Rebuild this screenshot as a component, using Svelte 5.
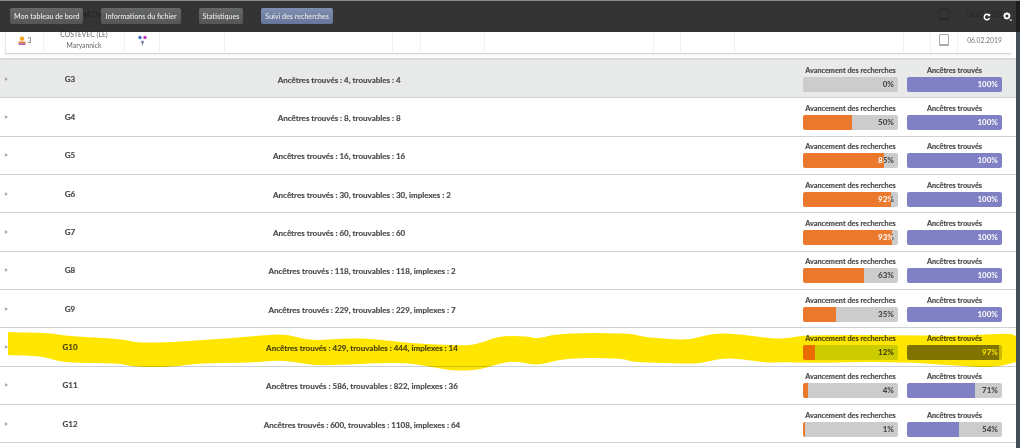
<script>
  const tabs = [
    { label: 'Mon tableau de bord' },
    { label: 'Informations du fichier' },
    { label: 'Statistiques' },
    { label: 'Suivi des recherches', active: true }
  ];

  const people = [
    { num: 2, name: ['MARGANA Daniel'], date: '06.02.2019' },
    { num: 3, name: ['COSTEVEC (LE)', 'Maryannick'], date: '06.02.2019' }
  ];

  const groups = [
    { id: 'G3', info: 'Ancêtres trouvés : 4, trouvables : 4', adv: 0, found: 100, grey: true },
    { id: 'G4', info: 'Ancêtres trouvés : 8, trouvables : 8', adv: 50, fill: 52, found: 100 },
    { id: 'G5', info: 'Ancêtres trouvés : 16, trouvables : 16', adv: 85, found: 100 },
    { id: 'G6', info: 'Ancêtres trouvés : 30, trouvables : 30', imp: 2, adv: 92, fill: 92.6, found: 100 },
    { id: 'G7', info: 'Ancêtres trouvés : 60, trouvables : 60', adv: 93, fill: 94, found: 100 },
    { id: 'G8', info: 'Ancêtres trouvés : 118, trouvables : 118', imp: 2, adv: 63, fill: 64, found: 100 },
    { id: 'G9', info: 'Ancêtres trouvés : 229, trouvables : 229', imp: 7, adv: 35, found: 100 },
    { id: 'G10', info: 'Ancêtres trouvés : 429, trouvables : 444', imp: 14, adv: 12, fill: 12.6, found: 97, marked: true },
    { id: 'G11', info: 'Ancêtres trouvés : 586, trouvables : 822', imp: 36, adv: 4, fill: 5, found: 71, foundFill: 71.5 },
    { id: 'G12', info: 'Ancêtres trouvés : 600, trouvables : 1108', imp: 64, adv: 1, fill: 2.2, found: 54, foundFill: 54.7 }
  ];

  // highlighter stroke drawn over the G10 row, doubled points keep the ends square
  const pts = [
    [8, 332], [8, 332], [50, 333], [67, 336], [123, 339], [137, 343], [173, 342], [233, 338], [267, 335], [287, 334],
    [310, 341], [347, 338], [377, 339], [407, 343], [467, 346], [480, 343], [500, 336], [527, 336], [537, 339],
    [560, 333], [630, 333], [643, 337], [670, 339], [690, 340], [713, 333], [740, 334], [773, 339], [790, 338],
    [805, 335], [897, 335], [960, 336], [1010, 333], [1016, 336], [1016, 336], [1016, 362], [1016, 362], [993, 368],
    [947, 365], [903, 362], [840, 362], [827, 363], [780, 362], [767, 363], [743, 359], [720, 358], [700, 364],
    [663, 363], [633, 362], [620, 358], [567, 358], [543, 364], [533, 365], [517, 361], [500, 363], [480, 370],
    [453, 371], [433, 367], [400, 362], [320, 366], [300, 363], [280, 360], [247, 363], [200, 363], [173, 367],
    [133, 367], [120, 363], [63, 363], [43, 356], [8, 355], [8, 355]
  ];

  function smooth(list) {
    const mid = (a, b) => `${(a[0] + b[0]) / 2} ${(a[1] + b[1]) / 2}`;
    let d = `M${mid(list[0], list[1])}`;
    for (let i = 1; i < list.length; i++) {
      const next = list[(i + 1) % list.length];
      d += ` Q${list[i][0]} ${list[i][1]} ${mid(list[i], next)}`;
    }
    return d + ' Z';
  }

  const marker = smooth(pts);
</script>

<div class="page">
  <div class="main">
    <div class="people">
      {#each people as p}
        <div class="person">
          <div class="c c1">
            <svg width="8" height="9" viewBox="0 0 8 9">
              <circle cx="4" cy="2.6" r="2.2" fill="#f0a020" />
              <rect x="0.5" y="5.5" width="7" height="2" fill="#e8832a" />
              <rect x="0.5" y="7.5" width="7" height="1.3" fill="#9a3fb0" />
            </svg>
            <span>{p.num}</span>
          </div>
          <div class="c c2">{#each p.name as line}<div>{line}</div>{/each}</div>
          <div class="c c3">
            <svg width="9" height="11" viewBox="0 0 9 11">
              <circle cx="2" cy="2.5" r="1.7" fill="#3f6fd0" />
              <circle cx="7" cy="2.5" r="1.7" fill="#c034b8" />
              <circle cx="4.5" cy="7" r="1.5" fill="#7a8aa0" />
              <path d="M4.5 8 V10.5" stroke="#8a8a8a" stroke-width="1" />
            </svg>
          </div>
          <div class="c w65"></div>
          <div class="c w168"></div>
          <div class="c w28"></div>
          <div class="c w64"></div>
          <div class="c w169"></div>
          <div class="c w27"></div>
          <div class="c w54"></div>
          <div class="c w169"></div>
          <div class="c w27"></div>
          <div class="c w27"><span class="check"></span></div>
          <div class="c date">{p.date}</div>
        </div>
      {/each}
    </div>

    <div class="groups">
      {#each groups as g}
        <div class="group" class:grey={g.grey} class:marked={g.marked}>
          <span class="arrow"></span>
          <span class="gid">{g.id}</span>
          <span class="info">{g.info}<span class:off={g.imp === undefined}>, implexes : {g.imp ?? 0}</span></span>
          <div class="stats">
            <div class="stat">
              <div class="label">Avancement des recherches</div>
              <div class="bar orange" style="--p:{g.fill ?? g.adv}%"><span>{g.adv}%</span></div>
            </div>
            <div class="stat">
              <div class="label">Ancêtres trouvés</div>
              <div class="bar purple" style="--p:{g.foundFill ?? g.found}%"><span>{g.found}%</span></div>
            </div>
          </div>
        </div>
      {/each}
    </div>
  </div>
  <div class="scrollbar"></div>
  <div class="edge"></div>

  <svg class="marker" width="1024" height="448" viewBox="0 0 1024 448">
    <path d={marker} fill="#ffe600" />
  </svg>

  <nav class="topbar">
    {#each tabs as t}
      <button class="tab" class:active={t.active}>{t.label}</button>
    {/each}
    <div class="tools">
      <svg width="8" height="8" viewBox="0 0 12 12" fill="none">
        <path d="M9.8 7.6 A4.1 4.1 0 1 1 9 3.2" stroke="#fff" stroke-width="2.2" />
        <path d="M10.8 0.4 V5 H6.2 Z" fill="#fff" />
      </svg>
      <svg width="9" height="9" viewBox="0 0 12 12">
        <circle cx="5.2" cy="5.2" r="3.1" fill="none" stroke="#fff" stroke-width="2.2" />
        <path d="M5.2 0.4 V2 M5.2 8.4 V10 M0.4 5.2 H2 M8.4 5.2 H10 M1.8 1.8 L2.9 2.9 M7.5 7.5 L8.6 8.6 M1.8 8.6 L2.9 7.5 M7.5 2.9 L8.6 1.8" stroke="#fff" stroke-width="1.6" />
        <path d="M9 10.8 H12" stroke="#fff" stroke-width="1.4" />
      </svg>
    </div>
  </nav>
</div>

<style>
  :global(body) {
    margin: 0;
    background: #fff;
  }

  .page {
    position: relative;
    display: flex;
    width: 1024px;
    height: 448px;
    overflow: hidden;
    font-family: Lato, "Liberation Sans", sans-serif;
    color: #4a4a4a;
  }

  .main {
    width: 1016px;
    flex: none;
  }

  .scrollbar {
    width: 4px;
    flex: none;
    background: #434f57;
  }

  .edge {
    flex: 1;
    background: #fff;
  }

  .people {
    margin: 1px 5px 0 5px;
    border-bottom: 1px solid #d5d8d8;
    box-shadow: 0 1px 2px rgba(0, 0, 0, 0.08);
  }

  .person {
    display: flex;
    height: 26px;
    font-size: 6.8px;
    color: #666;
  }

  .c {
    box-sizing: border-box;
    display: flex;
    flex-direction: column;
    align-items: center;
    justify-content: center;
    border-left: 1px solid #f0f0f0;
    text-align: center;
    line-height: 11px;
  }

  .c1 { width: 38px; flex-direction: row; gap: 2px; border-left-color: #e8e8e8; }
  .c2 { width: 81px; }
  .c3 { width: 35px; }
  .w65 { width: 65px; }
  .w168 { width: 168px; }
  .w28 { width: 28px; }
  .w64 { width: 64px; }
  .w169 { width: 169px; }
  .w27 { width: 27px; }
  .w54 { width: 54px; }
  .date { width: 54px; color: #777; }

  .check {
    width: 8px;
    height: 9px;
    border: 1px solid #aaa;
    border-bottom-width: 2px;
    border-radius: 1px;
    background: #fff;
  }

  .groups {
    margin-top: 4px;
    border-top: 2px solid #d8dada;
  }

  .group {
    box-sizing: border-box;
    display: grid;
    grid-template-columns: 50px 40px 544px 1fr;
    align-items: center;
    height: 38.33px;
    padding-right: 14px;
    border-bottom: 1px solid #ccd2d5;
    font-size: 8px;
    font-weight: 700;
    -webkit-text-stroke: 0.15px;
  }

  .group.grey {
    background: #e8e9e9;
  }

  .arrow {
    width: 0;
    height: 0;
    margin-left: 5px;
    border-left: 3px solid #aaa;
    border-top: 2px solid transparent;
    border-bottom: 2px solid transparent;
  }

  .gid {
    text-align: center;
  }

  .info {
    margin-top: 2px;
    text-align: center;
  }

  .off {
    visibility: hidden;
  }

  .stats {
    display: flex;
    justify-content: flex-end;
    gap: 9px;
  }

  .stat {
    display: flex;
    flex-direction: column;
    gap: 2px;
    width: 95px;
  }

  .label {
    font-size: 7.3px;
    text-align: center;
    line-height: 9px;
    white-space: nowrap;
  }

  .bar {
    height: 15px;
    border-radius: 2px;
    line-height: 15px;
    text-align: right;
    font-size: 8px;
    -webkit-text-stroke: 0;
  }

  .bar span {
    display: block;
    padding-right: 4px;
    font-weight: 900;
    background: linear-gradient(90deg, #fff var(--p), #444 var(--p));
    -webkit-background-clip: text;
    background-clip: text;
    color: transparent;
  }

  .orange {
    background: linear-gradient(90deg, #ea782d var(--p), var(--track, #ccc) var(--p));
  }

  .purple {
    background: linear-gradient(90deg, #8080c4 var(--p), var(--track, #ccc) var(--p));
  }

  /* the marker multiplies, this keeps the bars greenish under it like the scan */
  .marked .orange {
    --track: #cce2cc;
  }

  .marker {
    position: absolute;
    left: 0;
    top: 0;
    mix-blend-mode: multiply;
    pointer-events: none;
  }

  .topbar {
    position: absolute;
    left: 0;
    top: 0;
    box-sizing: border-box;
    display: flex;
    align-items: flex-start;
    gap: 18px;
    width: 1020px;
    height: 32px;
    padding: 7px 0 0 10px;
    border-top: 1px solid #8c8c8c;
    background: rgba(24, 24, 24, 0.88);
  }

  .tab {
    height: 16px;
    padding: 0 4px;
    border: none;
    border-radius: 2px;
    background: linear-gradient(rgba(120, 122, 122, 0.75), rgba(95, 97, 97, 0.75));
    color: #e4e4e4;
    font: 600 7.1px Lato, "Liberation Sans", sans-serif;
    white-space: nowrap;
  }

  .tab.active {
    background: linear-gradient(#7f8eb0, #66759a);
  }

  .tools {
    display: flex;
    align-items: center;
    gap: 12px;
    margin-left: auto;
    margin-top: 4px;
    margin-right: 8px;
  }
</style>
